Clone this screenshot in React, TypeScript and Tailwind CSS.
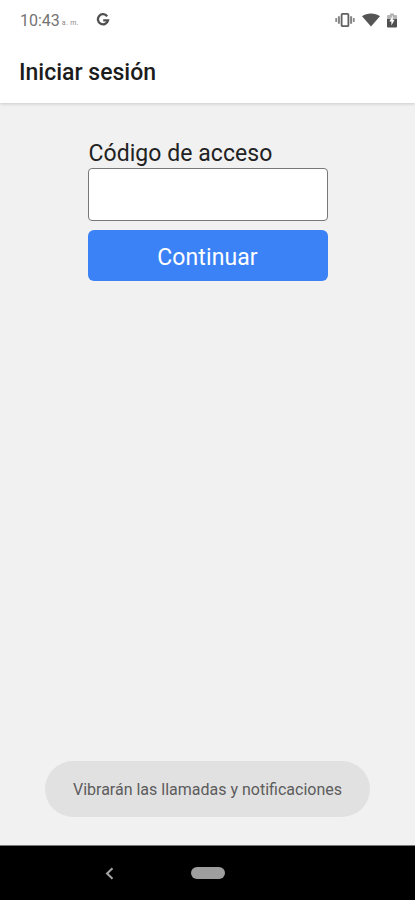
function StatusBar() {
  return (
    <div className="relative z-20 flex h-10 shrink-0 items-center bg-white pr-[18px] pl-[20px] text-[#737373]">
      <span className="pt-px text-[16px] leading-5">10:43</span>
      <span className="ml-[2px] pt-[6px] text-[7px] leading-[10px] tracking-[0.3px] text-[#8a8a8a]">a. m.</span>
      <svg width="14" height="14" viewBox="0 0 14 14" className="ml-[17px]" fill="none" stroke="#505050" strokeWidth="2.3">
        <path d="M11.2 3.3A5.1 5.1 0 1 0 12 7.4H7.2" />
      </svg>
      <div className="ml-auto flex items-center">
        <svg width="20" height="16" viewBox="0 0 20 16" fill="none" stroke="#606060">
          <rect x="6.6" y="1.8" width="6.8" height="12.4" rx="1" strokeWidth="1.8" />
          <path d="M3.9 4.3v7.4M16.1 4.3v7.4" strokeWidth="2" stroke="#838383" />
          <path d="M1.2 6v4M18.8 6v4" strokeWidth="1.8" stroke="#8c8c8c" />
        </svg>
        <svg width="18" height="14" viewBox="0 0 18 14" className="ml-[7px]" fill="#555">
          <path d="M0 3.3C5.2-.4 12.8-.4 18 3.3L9 13.6Z" />
        </svg>
        <svg width="10" height="15" viewBox="0 0 10 15" className="ml-[7px]">
          <path d="M1 2h2V.6h4V2h2a1 1 0 0 1 1 1v4H0V3a1 1 0 0 1 1-1Z" fill="#b5b5b5" />
          <path d="M0 6h10v7.5a1 1 0 0 1-1 1H1a1 1 0 0 1-1-1Z" fill="#505050" />
          <path d="M5.8 2.6 2.4 8.6h2v3.9l3.2-5.7h-1.8Z" fill="#fff" />
        </svg>
      </div>
    </div>
  );
}

export default function App() {
  return (
    <div className="flex h-[900px] w-[415px] flex-col overflow-hidden bg-[#f1f1f1] font-[Roboto,sans-serif]">
      <StatusBar />
      <header className="z-10 flex h-[63px] shrink-0 items-center bg-white pt-[2px] pl-[19px] shadow-[0_1px_3px_rgba(0,0,0,0.16)]">
        <h1 className="text-[23px] leading-7 font-medium text-[#1c1c1c]">Iniciar sesión</h1>
      </header>
      <main className="flex flex-1 flex-col items-center pt-[37px]">
        <form className="flex w-[240px] flex-col">
          <label htmlFor="code" className="h-[28px] pl-px text-[23px] leading-[28px] tracking-[0.05px] whitespace-nowrap text-[#222]">
            Código de acceso
          </label>
          <input id="code" className="h-[53px] w-full rounded-[4px] border border-[#777] bg-white px-2 outline-none" />
          <button type="button" className="mt-[9px] h-[51px] rounded-[6px] bg-[#3b82f6] pt-[4px] text-[23px] leading-[28px] tracking-[0.1px] text-white">
            Continuar
          </button>
        </form>
        <div className="mt-auto mb-[28px] flex h-[56px] w-[325px] items-center justify-center rounded-[28px] bg-[#e1e1e1] pt-[2px] text-[16px] whitespace-nowrap text-[#5c5c5c]">
          Vibrarán las llamadas y notificaciones
        </div>
      </main>
      <nav className="flex h-[55px] shrink-0 items-center border-t border-[#777] bg-black pl-[105px]">
        <svg width="9" height="13" viewBox="0 0 9 13" fill="none" stroke="#a5a5a5" strokeWidth="2">
          <path d="M7.5 1.2 2 6.5l5.5 5.3" />
        </svg>
        <span className="ml-[77px] h-[12px] w-[34px] rounded-full bg-[#9e9e9e]" />
      </nav>
    </div>
  );
}
